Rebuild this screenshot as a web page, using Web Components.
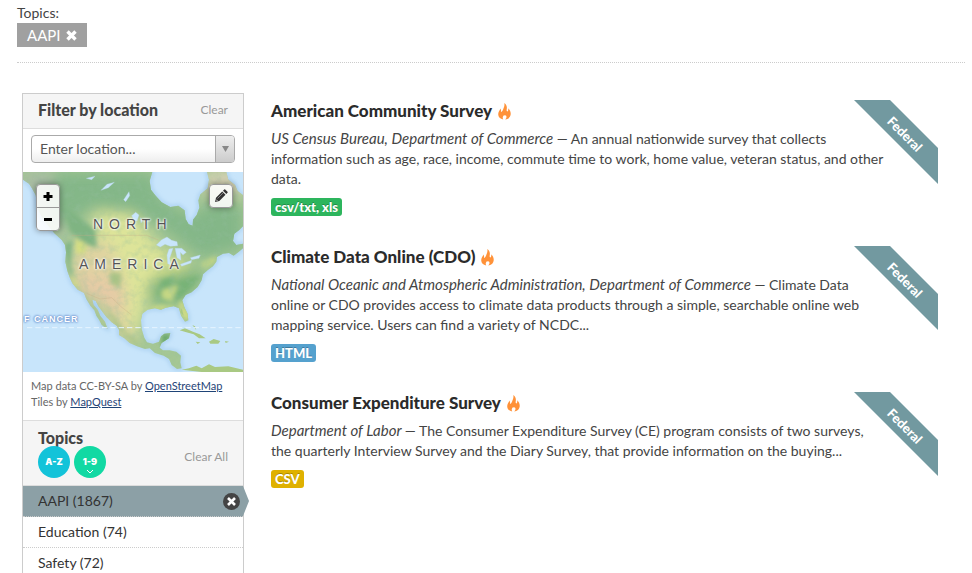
<!DOCTYPE html>
<html lang="en">
<head>
<meta charset="utf-8">
<title>Data catalog</title>
<style>
  body { margin: 0; background: #fff; color: #444; font: 14px/20px Lato, "Open Sans", sans-serif; }
</style>
</head>
<body>
<catalog-page></catalog-page>

<template id="catalog-page">
  <style>
    :host { display: block; padding: 3px 7px 0 17px; }
    .layout { display: flex; align-items: flex-start; padding: 30px 27px 0 5px; gap: 27px; }
    aside { flex: 0 0 222px; }
    main { flex: 1; min-width: 0; padding-top: 7px; display: grid; gap: 30px; }
    em { font-size: 15px; line-height: 18px; }
  </style>
  <active-filter label="Topics:">AAPI</active-filter>
  <div class="layout">
    <aside>
      <side-panel></side-panel>
    </aside>
    <main>
      <data-set format="csv/txt, xls" tone="#2db55d" kind="Federal">
        <span slot="title">American Community Survey</span>
        <em slot="source">US Census Bureau, Department of Commerce —</em>
        An annual nationwide survey that collects information such as age, race, income, commute time to work, home value, veteran status, and other data.
      </data-set>
      <data-set format="HTML" tone="#55a1ce" kind="Federal">
        <span slot="title">Climate Data Online (CDO)</span>
        <em slot="source">National Oceanic and Atmospheric Administration, Department of Commerce —</em>
        Climate Data online or CDO provides access to climate data products through a simple, searchable online web mapping service. Users can find a variety of NCDC...
      </data-set>
      <data-set format="CSV" tone="#dfb100" kind="Federal">
        <span slot="title">Consumer Expenditure Survey</span>
        <em slot="source">Department of Labor —</em>
        The Consumer Expenditure Survey (CE) program consists of two surveys, the quarterly Interview Survey and the Diary Survey, that provide information on the buying...
      </data-set>
    </main>
  </div>
</template>

<template id="active-filter">
  <style>
    :host { display: block; border-bottom: 1px dotted #ccc; padding-bottom: 15px; }
    .label { display: block; }
    .tag { display: inline-flex; align-items: center; gap: 5px; height: 24px; padding: 0 10px; background: #a0a0a0; color: #fff; font-size: 15px; vertical-align: top; }
    button { border: 0; background: none; padding: 0; display: flex; cursor: pointer; }
  </style>
  <span class="label"></span>
  <span class="tag"><slot></slot><button aria-label="Remove filter"><svg width="11" height="11" viewBox="0 0 11 11"><path d="M1.500 1.500l8 8M9.500 1.500l-8 8" stroke="#fff" stroke-width="3.4"/></svg></button></span>
</template>

<template id="side-panel">
  <style>
    :host { display: block; border: 1px solid #ccc; }
    .head { display: flex; align-items: center; justify-content: space-between; background: #f5f5f5; padding: 0 15px; border-bottom: 1px solid #ddd; }
    .where { height: 32px; padding-bottom: 2px; }
    h2 { margin: 0; font-size: 16px; font-weight: 900; line-height: 20px; color: #444; }
    a.clear { color: #999; font-size: 12px; text-decoration: none; }
    .pick { position: relative; margin: 6px 8px 9px; }
    select { appearance: none; display: block; width: 100%; height: 28px; padding: 0 28px 0 8px; border: 1px solid #aaa; border-radius: 4px; background: linear-gradient(#fff 50%, #eee); color: #555; font: 14px/20px Lato, sans-serif; }
    .arrow { position: absolute; right: 1px; top: 1px; bottom: 1px; width: 18px; border-left: 1px solid #aaa; border-radius: 0 3px 3px 0; background: linear-gradient(#eee, #ccc); display: grid; place-items: center; pointer-events: none; }
    .credit { margin: 0; padding: 6px 8px 10px; font-size: 11px; line-height: 16px; color: #666; border-bottom: 1px solid #ddd; }
    .credit a { color: #1f4477; }
    .topics { height: 64px; }
    .topics a.clear { margin-top: 8px; }
    .sort { display: flex; gap: 4px; margin-top: -2px; }
    .sort button { position: relative; width: 32px; height: 32px; padding: 0; border: 0; border-radius: 50%; color: #fff; font: 900 9px/32px Inter, sans-serif; }
    .az { background: #13c3d9; }
    .num { background: #11d9a3; }
    .num svg { position: absolute; left: 12px; top: 23px; }
    ul { list-style: none; margin: 0; padding: 0; }
  </style>
  <div class="head where"><h2>Filter by location</h2><a class="clear" href="#">Clear</a></div>
  <div class="pick">
    <select aria-label="Location"><option>Enter location...</option></select>
    <span class="arrow"><svg width="7" height="6"><path d="M0 0h7l-3.500 6z" fill="#888"/></svg></span>
  </div>
  <location-map></location-map>
  <p class="credit">Map data CC-BY-SA by <a href="#">OpenStreetMap</a><br>Tiles by <a href="#">MapQuest</a></p>
  <div class="head topics">
    <div><h2>Topics</h2>
      <div class="sort"><button class="az">A-Z</button><button class="num">1-9<svg width="8" height="5"><path d="M1 1l3 3 3-3" fill="none" stroke="#fff"/></svg></button></div>
    </div>
    <a class="clear" href="#">Clear All</a>
  </div>
  <ul>
    <topic-row role="listitem" active>AAPI (1867)</topic-row>
    <topic-row role="listitem">Education (74)</topic-row>
    <topic-row role="listitem">Safety (72)</topic-row>
  </ul>
</template>

<template id="topic-row">
  <style>
    :host { display: block; position: relative; border-bottom: 1px dotted #ccc; }
    a { display: block; padding: 5px 15px; color: #333; text-decoration: none; }
    button { display: none; position: absolute; right: 3px; top: 7px; width: 17px; height: 17px; padding: 0; border: 0; border-radius: 50%; background: #444; }
    :host([active]) { background: #8ca0a6; }
    :host([active]) button { display: grid; place-items: center; }
    :host([active])::after { content: ""; position: absolute; left: 100%; top: 0; width: 6px; height: 30px; background: #8ca0a6; clip-path: polygon(0 0, 100% 50%, 0 100%); }
  </style>
  <a href="#"><slot></slot></a>
  <button aria-label="Remove topic"><svg width="11" height="11"><path d="M2 2l7 7M9 2l-7 7" stroke="#fff" stroke-width="2.600"/></svg></button>
</template>

<template id="data-set">
  <style>
    :host { display: block; position: relative; }
    article { padding-right: 53px; }
    h3 { display: flex; align-items: center; gap: 6px; margin: 0 0 7px; font-size: 17px; font-weight: 900; line-height: 22px; color: #2b2b2b; }
    p { margin: 0 0 9px; }
    .format { display: inline-block; vertical-align: top; height: 18px; padding: 0 4px; border-radius: 3px; color: #fff; font-size: 13px; font-weight: 900; line-height: 19px; text-shadow: 0 -1px 0 rgba(0,0,0,.25); }
    .foot { height: 18px; }
    .ribbon { position: absolute; top: 0; right: 0; width: 84px; height: 84px; background: #7299a0; clip-path: polygon(0 0, 36px 0, 100% 48px, 100% 100%); color: #fff; font-size: 13px; font-weight: 900; }
    .ribbon span { position: absolute; left: 11px; top: 24px; width: 80px; text-align: center; transform: rotate(45deg); }
  </style>
  <article>
    <h3><slot name="title"></slot>
      <svg width="13" height="17" viewBox="0 0 13 17" fill="#ff9239" aria-hidden="true"><path d="M6.300 0C8.700 1.500 9.200 4 8.700 6.600C8.500 7.700 8.700 8.400 9.300 8.400C10.200 8.400 10.500 6.700 10.200 5.200C12 7 12.900 9 12.700 11.300C12.500 14.300 10 16.300 7.200 16.500C8.800 15.100 8.900 13.400 7.700 12.300C6.800 13 6.300 12.600 6.400 11.700C4.900 12.800 4.200 14.800 5.200 16.400C2.200 16 .2 14 .2 11.300C.2 8.900 1.600 7.600 2.500 5.500C3 6.600 3.300 7.700 2.900 9.100C3.800 8.900 4.600 8 5 6.800C5.700 4.700 6.900 2.800 6.300 0Z"/></svg>
    </h3>
    <p><slot name="source"></slot> <slot></slot></p>
    <div class="foot"><span class="format"></span></div>
  </article>
  <div class="ribbon"><span></span></div>
</template>

<template id="location-map">
  <style>
    :host { display: block; position: relative; height: 200px; overflow: hidden; background: #c8e5fb; font-family: "Liberation Sans", Arial, sans-serif; }
    .land { display: block; width: 100%; height: 100%; }
    .name { position: absolute; font-size: 14px; line-height: 16px; letter-spacing: 6px; color: #555; text-shadow: 0 0 2px #fff, 0 0 2px #fff, 0 0 3px #fff; }
    .north { left: 70px; top: 44px; }
    .america { left: 56px; top: 84px; }
    .tropic { position: absolute; left: 1px; top: 141px; color: #fff; font-size: 9px; font-weight: bold; line-height: 12px; letter-spacing: 1px; text-shadow: 0 0 2px #6d93cf, 0 0 2px #6d93cf, 0 0 3px #6d93cf; white-space: nowrap; }
    .zoom, .edit { position: absolute; top: 12px; border: 1px solid #999; border-radius: 4px; background: rgba(255,255,255,.87); box-shadow: 0 0 6px rgba(0,0,0,.4); }
    .zoom { left: 13px; display: grid; }
    button { display: grid; place-items: center; width: 22px; height: 22px; padding: 0; border: 0; background: none; }
    .zoom button + button { border-top: 1px solid #999; height: 23px; }
    .edit { right: 10px; }
  </style>
  <svg class="land" viewBox="24 21 660 600" preserveAspectRatio="xMidYMid slice" aria-hidden="true">
    <defs>
      <filter id="soft" x="-50%" y="-50%" width="200%" height="200%"><feGaussianBlur stdDeviation="20"/></filter>
      <filter id="fine" x="-20%" y="-20%" width="140%" height="140%"><feGaussianBlur stdDeviation="7"/></filter>
      <filter id="edge"><feGaussianBlur stdDeviation="2"/></filter>
      <filter id="relief" x="0" y="0" width="100%" height="100%"><feTurbulence type="fractalNoise" baseFrequency=".05" numOctaves="4" seed="8"/><feColorMatrix values="0 0 0 0 .3  0 0 0 0 .52  0 0 0 0 .35  1.900 0 0 0 -.82"/></filter>
      <path id="shape" d="M24 21V44L42 56L50 68L62 90L68 130L82 160L98 180L118 205L140 225L150 240L153 262L151 290L157 318L165 340L172 355L188 374L207 384L214 402L226 422L238 436L244 452L252 464L260 480L272 488L278 492L270 470L256 452L248 434L236 420L232 404L242 408L250 424L262 440L274 456L290 472L305 482L312 494L312 510L328 520L344 534L366 544L390 552L404 550L420 564L446 572L462 582L470 600L486 612L500 610L496 592L498 572L484 560L464 556L444 556L434 548L440 534L462 520L466 504L448 506L438 514L432 530L414 536L396 532L388 518L380 492L378 466L382 446L398 434L420 430L438 434L452 428L476 424L492 430L498 452L510 470L520 466L518 446L508 426L502 406L512 390L530 382L548 366L560 346L564 328L578 316L594 304L604 290L606 276L624 266L642 264L656 272L670 262L684 250V236L664 240L654 228L658 206L672 196L684 184V90L668 78L660 60L640 44L634 21H576L582 44L578 70L556 88L550 106L553 128L545 150L534 164L533 182L521 178L512 162L509 136L490 122L466 126L440 112L422 92L408 74L404 48L412 21Z"/>
      <clipPath id="coast"><use href="#shape"/></clipPath>
    </defs>
    <use href="#shape" fill="none" stroke="#a3cbed" stroke-width="8" filter="url(#fine)"/>
    <g filter="url(#edge)">
      <g clip-path="url(#coast)">
        <path fill="#a5c794" d="M24 21h660v600H24z"/>
        <g filter="url(#soft)">
          <path fill="#84b788" d="M60 21H410L440 100L520 150L620 100L684 130V250L560 280L470 210L380 150L240 130L150 180L90 160Z"/>
          <path fill="#a9bba4" d="M24 21H120L100 140L160 210L130 225L24 80Z"/>
          <path fill="#d9d1b6" d="M570 21H684V90L620 80L570 90Z"/>
          <path fill="#dde499" d="M235 140L350 145L400 210L470 280L450 330L400 370L390 430L360 520L300 480L240 400L250 290Z"/>
          <path fill="#d6e08c" d="M440 260L520 290L500 340L420 330Z"/>
          <path fill="#dfd3a0" d="M190 230L290 230L330 360L330 460L370 540L320 520L260 420L180 370L165 300Z"/>
          <path fill="#e6cba6" d="M190 320L320 350L340 430L310 440L190 380Z"/>
          <path fill="#80b57b" d="M400 350L440 330L560 310L550 360L500 400L480 420L430 420L400 400Z"/>
        </g>
        <g filter="url(#fine)">
          <path fill="#7fb482" d="M145 130L185 150L240 195L245 250L210 235L165 200ZM148 240L172 225L166 300L180 350L160 320Z"/>
          <path fill="#d5df82" d="M182 220L215 240L210 265L182 265ZM165 320L195 370L180 365ZM500 405L525 460L510 465L490 425ZM396 432L430 420L490 425L450 434Z"/>
          <path fill="#a9c386" d="M285 320L320 325L315 370L285 355ZM270 420L330 500L380 540L350 530L300 480Z"/>
          <path fill="#6ba96d" d="M440 505L466 505L462 530L440 548Z"/>
          <path fill="#78b377" d="M440 345L480 335L450 400L430 390ZM490 350L560 330L520 375L490 405L465 390Z"/>
          <path fill="#c5d784" d="M440 375L490 360L470 410L440 400ZM560 295L605 270L600 292L565 310Z"/>
        </g>
        <path filter="url(#relief)" opacity=".35" d="M24 21h660v600H24z"/>
        <path fill="none" stroke="#c6ae88" stroke-width="1.500" opacity=".7" d="M170 211H395L430 225M215 385L255 402L290 398L318 425L350 450"/>
      </g>
      <g fill="#c8e5fb" stroke="#b5d5e8" stroke-width="1">
        <path d="M424 240L440 224L456 216L470 226L486 230L488 242L466 244L450 238L436 246ZM462 252L474 250L464 280L468 300L458 296L456 270ZM480 250L500 250L514 262L504 270L496 262L498 286L486 278ZM496 298L530 286L528 294L500 304ZM526 278L556 270L552 280L530 284Z"/>
        <path d="M258 76L276 58L298 52L280 68ZM326 104L342 80L344 92L332 110ZM214 40L240 34L230 44ZM350 152L362 142L372 150L366 168L356 164ZM376 158L384 164L378 174Z"/>
      </g>
      <g fill="#a9c983">
        <path d="M494 496L510 490L534 500L554 508L572 520L552 520L536 508L514 502ZM582 530L596 522L616 528L610 536L586 536ZM542 530L556 532L548 537ZM500 614L522 610L544 602L560 610L582 598L600 606L640 604L684 614V621H560Z"/>
        <path d="M496 442L500 430L506 452ZM532 480L540 484L544 496ZM630 528L642 530L632 534Z"/>
      </g>
    </g>
    <path d="M36 488H684" fill="none" stroke="#e7f5ff" stroke-width="3" stroke-dasharray="16 9"/>
  </svg>
  <span class="name north">NORTH</span>
  <span class="name america">AMERICA</span>
  <span class="tropic">F CANCER</span>
  <div class="zoom">
    <button aria-label="Zoom in"><svg width="10" height="10"><path d="M5 1v9M0.500 5.500h9" stroke="#000" stroke-width="3"/></svg></button>
    <button aria-label="Zoom out"><svg width="8" height="3"><path d="M0 0h8v3H0z"/></svg></button>
  </div>
  <div class="edit"><button aria-label="Draw area"><svg width="14" height="14" viewBox="0 0 14 14"><path d="M1 13l1-4.300 6.200-6.200 3.300 3.300L5.300 12zM9 1.700l1.200-1.200q.5-.5 1 0l2.300 2.300q.5.500 0 1L12.300 5z" fill="#333"/><path d="M3.500 9.500l5.500-5.500" stroke="#999" stroke-width=".8"/><path d="M2 10.500l1.500 1.500" stroke="#eee" stroke-width=".8"/></svg></button></div>
</template>

<script>
  class TemplateElement extends HTMLElement {
    constructor() {
      super();
      const template = document.getElementById(this.localName);
      this.attachShadow({ mode: "open" }).append(template.content.cloneNode(true));
    }
    find(selector) { return this.shadowRoot.querySelector(selector); }
  }
  class ActiveFilter extends TemplateElement {
    connectedCallback() { this.find(".label").textContent = this.getAttribute("label"); }
  }
  class DataSet extends TemplateElement {
    connectedCallback() {
      const format = this.find(".format");
      format.textContent = this.getAttribute("format");
      format.style.background = this.getAttribute("tone");
      this.find(".ribbon span").textContent = this.getAttribute("kind");
    }
  }
  customElements.define("active-filter", ActiveFilter);
  customElements.define("data-set", DataSet);
  customElements.define("topic-row", class extends TemplateElement {});
  customElements.define("location-map", class extends TemplateElement {});
  customElements.define("side-panel", class extends TemplateElement {});
  customElements.define("catalog-page", class extends TemplateElement {});
</script>
</body>
</html>
